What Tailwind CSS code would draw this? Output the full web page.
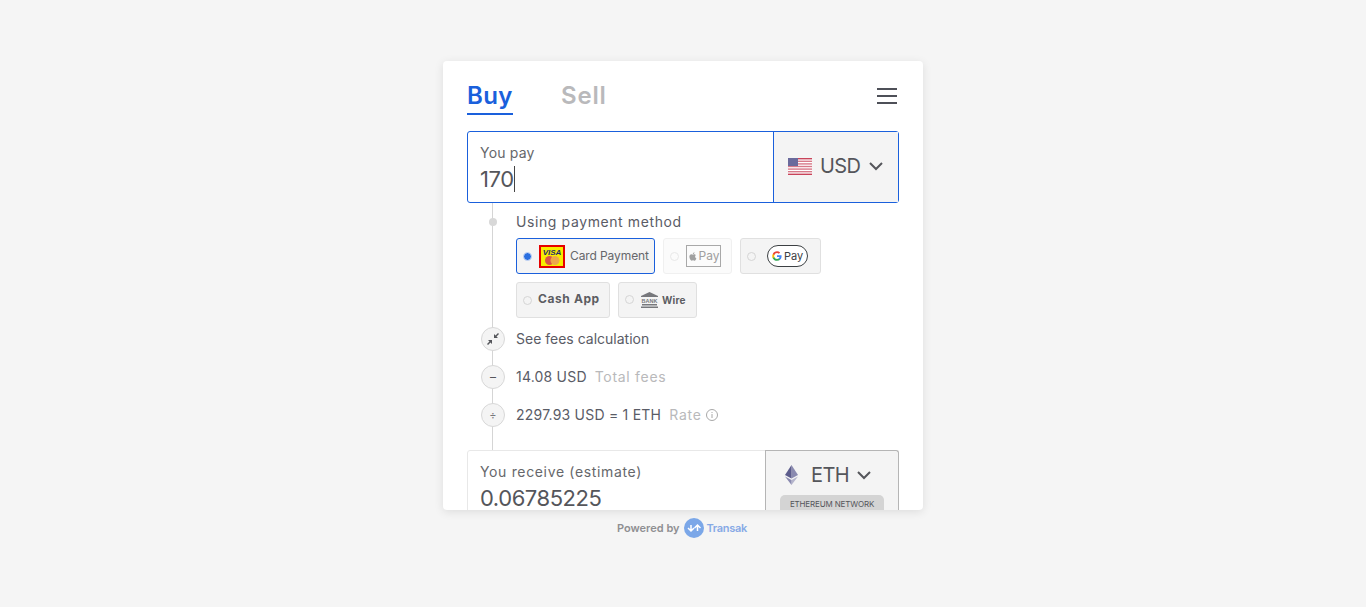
<!DOCTYPE html>
<html lang="en">
<head>
  <meta charset="UTF-8" />
  <meta name="viewport" content="width=device-width, initial-scale=1.0" />
  <script src="https://cdn.jsdelivr.net/npm/@tailwindcss/browser@4"></script>
  <title>Transak</title>
</head>
<body class="bg-[#f5f5f5] h-[607px] overflow-hidden font-['Inter','Noto_Sans',sans-serif] text-[#55565b]">
  <main class="w-[480px] mx-auto pt-[61px]">

    <!-- Card -->
    <div class="h-[449px] overflow-hidden bg-white rounded-[4px] shadow-[0_2px_10px_rgba(0,0,0,0.1)] px-6">
      <!-- Tabs -->
      <div class="flex justify-between items-start pt-[19px] h-[70px]">
        <div class="flex gap-12">
          <div class="h-[35px] border-b-2 border-[#1a60dc] text-[#1a60dc] text-[24px] leading-[31px] font-semibold tracking-[0.4px] w-[46px] whitespace-nowrap">Buy</div>
          <div class="text-[#b9b9bb] text-[24px] leading-[31px] font-semibold tracking-[0.8px]">Sell</div>
        </div>
        <div class="mt-[8px] mr-[2px] w-5 flex flex-col gap-[5px]">
          <div class="h-[2px] bg-[#4e5058]"></div>
          <div class="h-[2px] bg-[#4e5058]"></div>
          <div class="h-[2px] bg-[#4e5058]"></div>
        </div>
      </div>

      <!-- You pay -->
      <div class="flex h-[72px] border border-[#1a60dc] rounded-[3px]">
        <div class="flex-1 pl-[12px] pt-[12px]">
          <div class="text-[14px] leading-[18px] tracking-[0.2px] text-[#66676b]">You pay</div>
          <div class="flex items-center h-[26px] mt-[4px]">
            <span class="text-[22px] leading-[26px] tracking-[-0.4px]">170</span><span class="w-px h-[26px] bg-[#444]"></span>
          </div>
        </div>
        <div class="w-[125px] border-l border-[#1a60dc] bg-[#f4f4f4] flex items-center pl-[14px] pb-[2px]">
          <svg width="24" height="17" viewBox="0 0 24 17">
            <rect width="24" height="17" fill="#fff"/>
            <rect y="0" width="24" height="1.4" fill="#c8445a"/>
            <rect y="2.6" width="24" height="1.4" fill="#d77a8a"/>
            <rect y="5.2" width="24" height="1.4" fill="#d77a8a"/>
            <rect y="7.8" width="24" height="1.4" fill="#d77a8a"/>
            <rect y="10.4" width="24" height="1.4" fill="#d77a8a"/>
            <rect y="13" width="24" height="1.4" fill="#d77a8a"/>
            <rect y="15.6" width="24" height="1.4" fill="#c8445a"/>
            <rect width="10" height="8" fill="#6a6a9c"/>
          </svg>
          <span class="ml-[8px] text-[20px] leading-[26px] tracking-[-0.6px]">USD</span>
          <svg class="ml-[8px]" width="16" height="10" viewBox="0 0 16 10" fill="none" stroke="#55565b" stroke-width="2"><path d="M2 2l6 6 6-6"/></svg>
        </div>
      </div>

      <!-- Timeline -->
      <div class="relative h-[247px] pl-[49px]">
        <div class="absolute left-[25px] top-0 bottom-0 w-px bg-[#d5d5d5]"></div>
        <div class="absolute left-[22px] top-[15px] w-2 h-2 rounded-full bg-[#d8d8d8]"></div>

        <div class="pt-[10px] text-[14px] leading-[18px] tracking-[0.6px] text-[#5a5c66]">Using payment method</div>

        <div class="flex gap-2 mt-[7px]">
          <div class="w-[139px] h-9 flex items-center pl-[6px] bg-[#f4f4f4] border border-[#1a60dc] rounded-[3px]">
            <span class="w-[9px] h-[9px] rounded-full bg-[#2a6fe0] border-[1.5px] border-[#cfdcf5]"></span>
            <svg class="ml-[7px]" width="26" height="23" viewBox="0 0 26 23">
              <rect x="1" y="1" width="24" height="21" fill="#f8ec00" stroke="#e60000" stroke-width="2"/>
              <circle cx="10.5" cy="15.5" r="4.5" fill="#d9534a"/>
              <circle cx="16" cy="15.5" r="4.5" fill="#eda94a"/>
              <text x="13" y="9.5" text-anchor="middle" font-family="Liberation Sans" font-size="8" font-weight="700" font-style="italic" fill="#1d2a6b">VISA</text>
            </svg>
            <span class="ml-[5px] text-[12px] leading-4 text-[#66676b] tracking-[-0.1px] whitespace-nowrap">Card Payment</span>
          </div>
          <div class="w-[69px] h-9 flex items-center pl-[6px] border border-[#f0f0f0] bg-[#fbfbfb] rounded-[3px]">
            <span class="w-[9px] h-[9px] rounded-full border border-[#e8e8e8]"></span>
            <span class="ml-[7px] w-[35px] h-[22px] border border-[#a8a8a8] flex items-center justify-center gap-px text-[12px] text-[#a0a0a0]">
              <svg width="10" height="11" viewBox="0 0 24 24" fill="#a0a0a0"><path d="M17 12.5c0-2.5 2-3.7 2.100-3.800-1.200-1.700-3-1.900-3.600-2-1.500-.2-3 .9-3.800.9s-2-.9-3.300-.9c-1.700 0-3.300 1-4.200 2.500-1.800 3.100-.5 7.700 1.300 10.200.9 1.200 1.900 2.600 3.200 2.600s1.800-.8 3.400-.8 2 .8 3.400.8 2.300-1.300 3.100-2.500c1-1.400 1.400-2.800 1.400-2.900-.1 0-2.700-1-2.700-4.100zM14.500 5c.7-.9 1.200-2 1-3.200-1 0-2.200.7-2.900 1.500-.6.700-1.200 1.900-1 3 1.100.1 2.200-.5 2.900-1.300z"/></svg>
              Pay
            </span>
          </div>
          <div class="w-[81px] h-9 flex items-center pl-[6px] bg-[#f4f4f4] border border-[#e0e0e0] rounded-[3px]">
            <span class="w-[9px] h-[9px] rounded-full border border-[#d5d5d5]"></span>
            <span class="ml-[11px] w-[41px] h-[22px] rounded-full border border-[#3c4043] bg-white flex items-center justify-center gap-[2px] text-[11px] text-[#3c4043]">
              <svg width="10" height="10" viewBox="0 0 24 24">
                <path fill="#4285f4" d="M23 12.300c0-.8-.1-1.600-.2-2.300H12v4.300h6.200c-.3 1.400-1.100 2.600-2.300 3.400v2.800h3.700c2.100-2 3.400-4.900 3.400-8.200z"/>
                <path fill="#34a853" d="M12 23.500c3.100 0 5.700-1 7.600-2.800l-3.700-2.800c-1 .7-2.400 1.100-3.900 1.100-3 0-5.500-2-6.400-4.700H1.800v2.900c1.900 3.800 5.800 6.300 10.200 6.300z"/>
                <path fill="#fbbc04" d="M5.600 14.300c-.5-1.400-.5-3 0-4.500V6.900H1.800c-1.600 3.200-1.600 7 0 10.300l3.800-2.900z"/>
                <path fill="#ea4335" d="M12 5c1.700 0 3.200.6 4.300 1.700l3.300-3.300C17.600 1.600 15 .5 12 .5 7.600.5 3.700 3 1.800 6.900l3.800 2.900C6.500 7 9 5 12 5z"/>
              </svg>
              Pay
            </span>
          </div>
        </div>

        <div class="flex gap-2 mt-2">
          <div class="w-[94px] h-9 flex items-center pl-[6px] pb-[2px] bg-[#f4f4f4] border border-[#e0e0e0] rounded-[3px]">
            <span class="mt-[2px] w-[9px] h-[9px] rounded-full border border-[#d5d5d5]"></span>
            <span class="ml-[6px] text-[12px] leading-4 font-bold tracking-[0.6px] text-[#5c5d62] whitespace-nowrap">Cash App</span>
          </div>
          <div class="w-[79px] h-9 flex items-center pl-[6px] pb-[1px] bg-[#f4f4f4] border border-[#e0e0e0] rounded-[3px]">
            <span class="w-[9px] h-[9px] rounded-full border border-[#d5d5d5]"></span>
            <svg class="ml-[7px]" width="17" height="16" viewBox="0 0 17 16" fill="#77787c">
              <path d="M8.500 0L17 4v1H0V4z"/>
              <text x="8.500" y="11" text-anchor="middle" font-family="Liberation Sans" font-size="5.500" font-weight="700">BANK</text>
              <rect x="1" y="12" width="15" height="1.500"/>
              <rect x="0" y="14.500" width="17" height="1.500"/>
            </svg>
            <span class="ml-[4px] text-[10px] leading-4 font-bold tracking-[0.2px] text-[#5c5d62]">Wire</span>
          </div>
        </div>

        <!-- Fees -->
        <div class="flex items-center gap-[11px] h-6 mt-[9px]">
          <div class="relative -ml-[35px] w-6 h-6 rounded-full bg-[#f4f4f4] border border-[#d8d8d8] flex items-center justify-center">
            <svg width="12" height="12" viewBox="0 0 12 12" fill="#55565b">
              <path d="M11 0l1 1-2.500 2.500L11 5H7V1l1.500 1.500zM1 12l-1-1 2.500-2.500L1 7h4v4L3.500 9.500z"/>
            </svg>
          </div>
          <span class="text-[14px] leading-[18px] text-[#5a5c66]">See fees calculation</span>
        </div>
        <div class="flex items-center gap-[11px] h-6 mt-[14px]">
          <div class="relative -ml-[35px] w-6 h-6 rounded-full bg-[#f4f4f4] border border-[#d8d8d8] flex items-center justify-center text-[12px] text-[#55565b]">–</div>
          <span class="text-[14px] leading-[18px] tracking-[0.2px] text-[#5a5c66]">14.08 USD</span>
          <span class="-ml-[3px] text-[14px] leading-[18px] tracking-[0.7px] text-[#b9b9bb]">Total fees</span>
        </div>
        <div class="flex items-center gap-[11px] h-6 mt-[14px]">
          <div class="relative -ml-[35px] w-6 h-6 rounded-full bg-[#f4f4f4] border border-[#d8d8d8] flex items-center justify-center text-[11px] text-[#77787c]">÷</div>
          <span class="text-[14px] leading-[18px] tracking-[0.22px] text-[#5a5c66] whitespace-nowrap">2297.93 USD = 1 ETH</span>
          <span class="-ml-[3px] text-[14px] leading-[18px] tracking-[0.8px] text-[#b9b9bb]">Rate</span>
          <svg class="-ml-[7px]" width="12" height="12" viewBox="0 0 12 12" fill="none" stroke="#a8a8a8"><circle cx="6" cy="6" r="5.500"/><path d="M6 5v4M6 3v1"/></svg>
        </div>
      </div>

      <!-- You receive -->
      <div class="flex h-[72px] border border-[#e8e8e8] rounded-[3px]">
        <div class="flex-1 pl-[12px] pt-[12px]">
          <div class="text-[14px] leading-[18px] tracking-[0.65px] text-[#66676b]">You receive (estimate)</div>
          <div class="text-[22px] leading-[26px] tracking-[-0.45px] mt-[4px]">0.06785225</div>
        </div>
        <div class="w-[134px] -mr-px -mt-px border-l border-t border-r border-[#b5b5b5] rounded-tr-[3px] bg-[#f4f4f4] flex flex-col items-center">
          <div class="flex items-center h-[50px] pb-[2px] pr-[8px]">
            <svg width="15" height="20" viewBox="0 0 15 20">
              <path fill="#8a8ab0" d="M7.500 0L14 10l-6.500 3.500z"/>
              <path fill="#5c5c8c" d="M7.500 0L1 10l6.500 3.500z"/>
              <path fill="#b5b5cc" d="M7.500 20L14 11.500l-6.500 3.500z"/>
              <path fill="#8a8ab0" d="M7.500 20L1 11.500 7.500 15z"/>
            </svg>
            <span class="ml-[12px] text-[20px] leading-[26px] tracking-[-0.6px]">ETH</span>
            <svg class="ml-[7px]" width="16" height="10" viewBox="0 0 16 10" fill="none" stroke="#55565b" stroke-width="2"><path d="M2 2l6 6 6-6"/></svg>
          </div>
          <div class="w-[104px] h-[20px] -mt-[6px] rounded-[5px] bg-[#d4d4d4] text-[8px] leading-[18px] text-center text-[#55565b] whitespace-nowrap tracking-[-0.15px]">ETHEREUM NETWORK</div>
        </div>
      </div>
    </div>

    <!-- Footer -->
    <div class="flex items-center justify-center h-[20px] mt-[8px] pr-[2px] text-[11px] font-semibold">
      <span class="text-[#8f8f92]">Powered by</span>
      <span class="ml-[4px] w-5 h-5 rounded-full bg-[#7ba7e8] flex items-center justify-center">
        <svg width="14" height="10" viewBox="0 0 14 10" fill="none" stroke="#fff" stroke-width="1.500"><path d="M1 5l3 3 3-3M4 8V2M7.500 5l3-3 3 3M10.500 2v6"/></svg>
      </span>
      <span class="ml-[3px] tracking-[-0.3px] text-[#86a9e6]">Transak</span>
    </div>
  </main>
</body>
</html>
